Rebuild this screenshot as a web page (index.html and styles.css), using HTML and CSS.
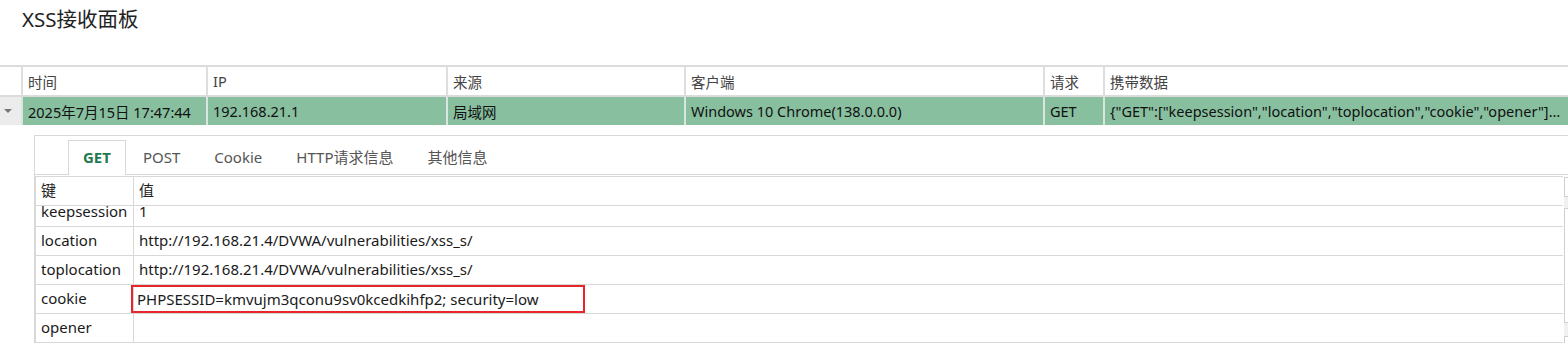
FILE: index.html
```html
<!DOCTYPE html>
<html lang="zh-CN">
<head>
    <meta charset="UTF-8">
    <meta name="viewport" content="width=device-width, initial-scale=1.0">
    <title>XSS接收面板</title>
    <link rel="stylesheet" href="styles.css">
</head>
<body>
    <h1 class="title">XSS接收面板</h1>

    <table class="records">
        <colgroup>
            <col class="col-arrow">
            <col class="col-time">
            <col class="col-ip">
            <col class="col-source">
            <col class="col-client">
            <col class="col-method">
            <col>
        </colgroup>
        <thead>
            <tr>
                <th class="arrow-cell"></th>
                <th>时间</th>
                <th>IP</th>
                <th>来源</th>
                <th>客户端</th>
                <th>请求</th>
                <th>携带数据</th>
            </tr>
        </thead>
        <tbody>
            <tr class="selected">
                <td class="arrow-cell"><span class="caret"></span></td>
                <td>2025年7月15日 17:47:44</td>
                <td>192.168.21.1</td>
                <td>局域网</td>
                <td>Windows 10 Chrome(138.0.0.0)</td>
                <td>GET</td>
                <td>{"GET":["keepsession","location","toplocation","cookie","opener"],"POST":[],"Cookie":[]}</td>
            </tr>
        </tbody>
    </table>

    <div class="detail">
        <div class="tabs">
            <div class="tab active">GET</div>
            <div class="tab">POST</div>
            <div class="tab">Cookie</div>
            <div class="tab">HTTP请求信息</div>
            <div class="tab">其他信息</div>
        </div>

        <div class="kv-area">
            <div class="kv">
                <div class="kv-row kv-head">
                    <div class="kv-key">键</div>
                    <div class="kv-val">值</div>
                </div>
                <div class="kv-body">
                    <div class="kv-rows">
                        <div class="kv-row">
                            <div class="kv-key">keepsession</div>
                            <div class="kv-val">1</div>
                        </div>
                        <div class="kv-row">
                            <div class="kv-key">location</div>
                            <div class="kv-val">http://192.168.21.4/DVWA/vulnerabilities/xss_s/</div>
                        </div>
                        <div class="kv-row">
                            <div class="kv-key">toplocation</div>
                            <div class="kv-val">http://192.168.21.4/DVWA/vulnerabilities/xss_s/</div>
                        </div>
                        <div class="kv-row">
                            <div class="kv-key">cookie</div>
                            <div class="kv-val"><span class="mark">PHPSESSID=kmvujm3qconu9sv0kcedkihfp2; security=low</span></div>
                        </div>
                        <div class="kv-row">
                            <div class="kv-key">opener</div>
                            <div class="kv-val"></div>
                        </div>
                    </div>
                </div>
            </div>

            <div class="scrollbar">
                <div class="sb-btn"></div>
                <div class="sb-track">
                    <div class="sb-thumb"></div>
                </div>
                <div class="sb-btn"></div>
            </div>
        </div>
    </div>
</body>
</html>
```

FILE: styles.css
```css
body {
    margin: 0;
    font-family: "Noto Sans", "Noto Sans CJK SC", sans-serif;
    font-size: 14.5px;
    color: #1a1a1a;
    background: #fff;
    overflow: hidden;
    width: 1568px;
    height: 343px;
}

.title {
    margin: 0;
    padding: 5px 0 0 22px;
    height: 65px;
    box-sizing: border-box;
    font-size: 20.5px;
    font-weight: normal;
    line-height: 28px;
    color: #222;
}

/* top record list */
.records {
    width: 1568px;
    table-layout: fixed;
    border-collapse: collapse;
    border-top: 2px solid #dcdcdc;
}

.col-arrow { width: 22px; }
.col-time { width: 185px; }
.col-ip { width: 240px; }
.col-source { width: 238px; }
.col-client { width: 359px; }
.col-method { width: 60px; }

.records th,
.records td {
    height: 28px;
    padding: 0 5px;
    text-align: left;
    font-weight: normal;
    white-space: nowrap;
    overflow: hidden;
    text-overflow: ellipsis;
    border-left: 2px solid #dedede;
}

.records th {
    color: #444;
    border-bottom: 2px solid #dcdcdc;
}

.records .arrow-cell {
    border-left: none;
    padding: 0;
}

.selected td {
    background: #87bf9f;
    color: #111;
    border-left-color: #d9e6df;
}

.selected td.arrow-cell {
    background: #ececec;
}

.caret {
    display: block;
    width: 0;
    height: 0;
    margin-left: 4px;
    border-left: 4px solid transparent;
    border-right: 4px solid transparent;
    border-top: 4px solid #777;
}

/* detail panel */
.detail {
    margin: 10px 0 0 34px;
    width: 1546px;
    border-top: 1px solid #d8d8d8;
    border-left: 1px solid #d8d8d8;
    font-size: 15px;
}

.tabs {
    display: flex;
    padding: 4px 0 0 33px;
    height: 34px;
    border-bottom: 1px solid #d8d8d8;
}

.tab {
    padding: 0 16px;
    line-height: 33px;
    color: #555;
    border: 1px solid transparent;
    border-bottom: none;
}

.tab.active {
    padding: 0 14px;
    color: #1f7a4d;
    font-weight: bold;
    border-color: #d8d8d8;
    background: #fff;
    margin-bottom: -1px;
}

.kv-area {
    display: flex;
    margin-top: 1px;
}

.kv {
    flex: 1;
    border-left: 1px solid #d8d8d8;
    border-top: 1px solid #d8d8d8;
}

.kv-row {
    display: grid;
    grid-template-columns: 97px 1fr;
    height: 29px;
    border-bottom: 1px solid #d8d8d8;
    box-sizing: border-box;
}

.kv-row > div {
    padding: 0 5px;
    line-height: 26px;
    white-space: nowrap;
}

.kv-val {
    border-left: 1px solid #d8d8d8;
}

.kv-head {
    height: 29px;
    color: #222;
}

.kv-body {
    height: 140px;
    overflow: hidden;
}

.kv-rows {
    margin-top: -8px;
}

.mark {
    display: block;
    width: 454px;
    height: 28px;
    margin-left: -8px;
    padding-left: 4px;
    border: 2px solid #e8252b;
    line-height: 24px;
    box-sizing: border-box;
}

.scrollbar {
    width: 17px;
    margin-left: 1px;
    padding-top: 1px;
}

.sb-btn {
    height: 18px;
    border: 1px solid #cfcfcf;
    background: #fff;
}

.sb-track {
    height: 128px;
    padding-top: 11px;
    background: #f0f0f0;
}

.sb-thumb {
    height: 113px;
    border: 1px solid #cfcfcf;
    background: #fff;
}
```
